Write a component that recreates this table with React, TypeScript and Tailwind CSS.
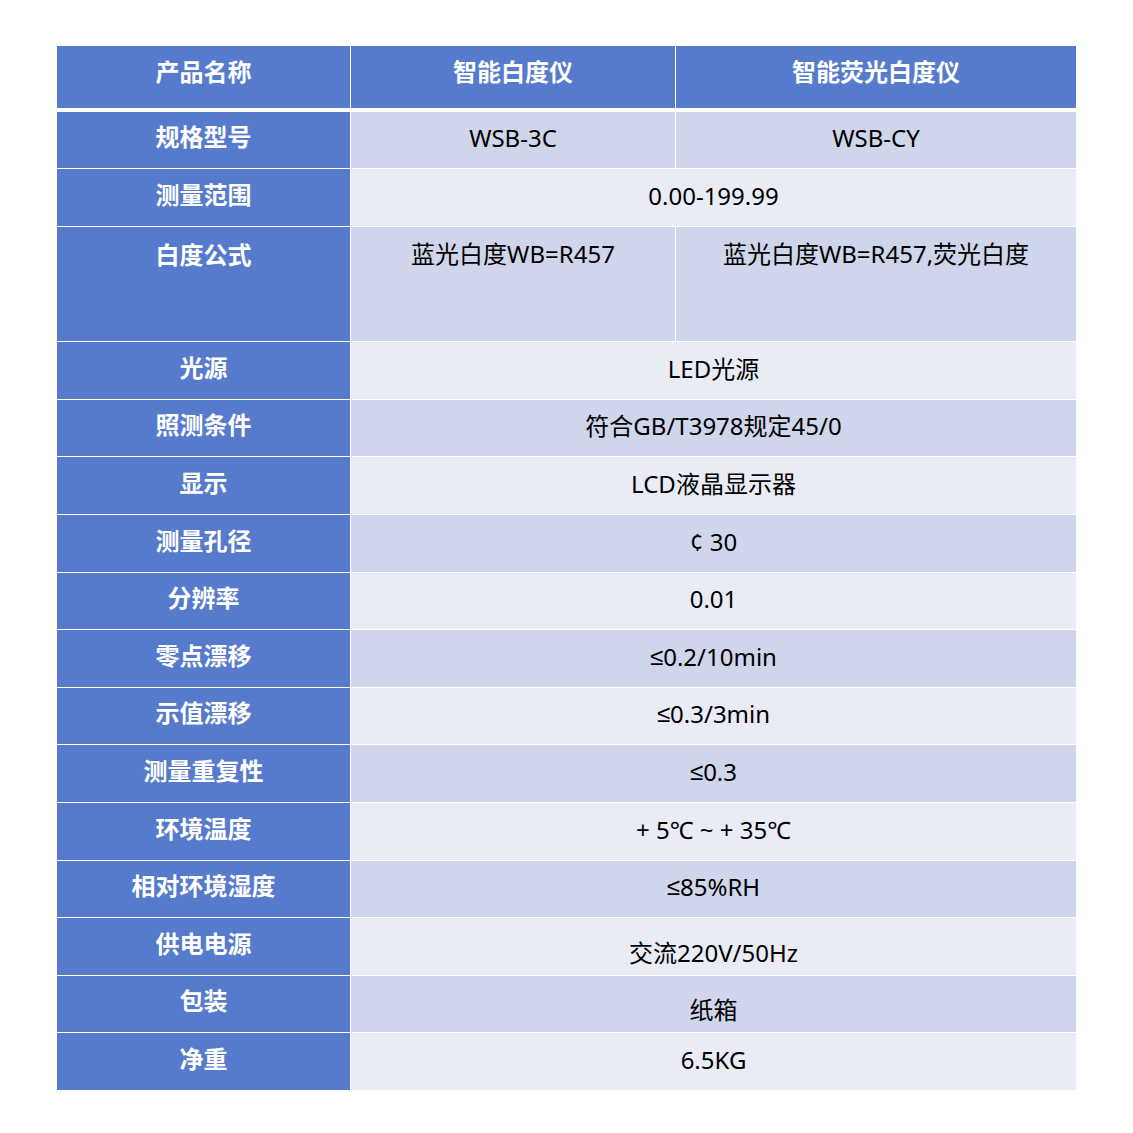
const rows = [
  { label: "规格型号", h: "h-[56px]", bg: "bg-[#cfd5ea]", a: "WSB-3C", b: "WSB-CY" },
  { label: "测量范围", h: "h-[57px]", bg: "bg-[#e9ebf5]", v: "0.00-199.99" },
  { label: "白度公式", h: "h-[114px]", bg: "bg-[#cfd5ea]", a: "蓝光白度WB=R457", b: "蓝光白度WB=R457,荧光白度", top: true },
  { label: "光源", h: "h-[57px]", bg: "bg-[#e9ebf5]", v: "LED光源" },
  { label: "照测条件", h: "h-[56px]", bg: "bg-[#cfd5ea]", v: "符合GB/T3978规定45/0" },
  { label: "显示", h: "h-[57px]", bg: "bg-[#e9ebf5]", v: "LCD液晶显示器" },
  { label: "测量孔径", h: "h-[57px]", bg: "bg-[#cfd5ea]", v: "¢ 30" },
  { label: "分辨率", h: "h-[56px]", bg: "bg-[#e9ebf5]", v: "0.01" },
  { label: "零点漂移", h: "h-[57px]", bg: "bg-[#cfd5ea]", v: "0.2/10min", le: true },
  { label: "示值漂移", h: "h-[56px]", bg: "bg-[#e9ebf5]", v: "0.3/3min", le: true },
  { label: "测量重复性", h: "h-[57px]", bg: "bg-[#cfd5ea]", v: "0.3", le: true },
  { label: "环境温度", h: "h-[57px]", bg: "bg-[#e9ebf5]", v: "+ 5℃ ~ + 35℃" },
  { label: "相对环境湿度", h: "h-[56px]", bg: "bg-[#cfd5ea]", v: "85%RH", le: true },
  { label: "供电电源", h: "h-[57px]", bg: "bg-[#e9ebf5]", v: "交流220V/50Hz", low: true },
  { label: "包装", h: "h-[56px]", bg: "bg-[#cfd5ea]", v: "纸箱", low: true },
  { label: "净重", h: "h-[57px]", bg: "bg-[#e9ebf5]", v: "6.5KG" },
];

const cell = "flex justify-center text-[24px] text-black";

export default function App() {
  return (
    <div className="min-h-[1133px] bg-white pt-[46px] pl-[57px] font-['Noto_Sans','Noto_Sans_CJK_SC',sans-serif]">
      <div className="w-[1019px] bg-white">
        <div className="grid grid-cols-[293px_324px_400px] gap-x-px h-[62px] mb-[4px] text-white font-bold text-[24px] font-['Noto_Sans_CJK_SC',sans-serif]">
          <div className="bg-[#577bcc] flex items-center justify-center pb-3">产品名称</div>
          <div className="bg-[#577bcc] flex items-center justify-center pb-3">智能白度仪</div>
          <div className="bg-[#577bcc] flex items-center justify-center pb-3">智能荧光白度仪</div>
        </div>
        <div className="flex flex-col gap-y-px">
          {rows.map((r) => (
            <div key={r.label} className={`grid grid-cols-[293px_324px_400px] gap-x-px ${r.h}`}>
              <div
                className={`bg-[#577bcc] flex justify-center text-white font-bold text-[24px] font-['Noto_Sans_CJK_SC',sans-serif] ${
                  r.top ? "items-start pt-[9px]" : "items-center pb-2"
                }`}
              >
                {r.label}
              </div>
              {r.v ? (
                <div className={`col-span-2 ${r.bg} ${cell} items-center ${r.low ? "pt-3" : "pb-1"}`}>
                  {r.le && <span className="font-['Liberation_Sans',sans-serif]">≤</span>}
                  {r.v}
                </div>
              ) : (
                <>
                  <div className={`${r.bg} ${cell} ${r.top ? "items-start pt-[9px]" : "items-center pb-1"}`}>{r.a}</div>
                  <div className={`${r.bg} ${cell} ${r.top ? "items-start pt-[9px]" : "items-center pb-1"}`}>{r.b}</div>
                </>
              )}
            </div>
          ))}
        </div>
      </div>
    </div>
  );
}
